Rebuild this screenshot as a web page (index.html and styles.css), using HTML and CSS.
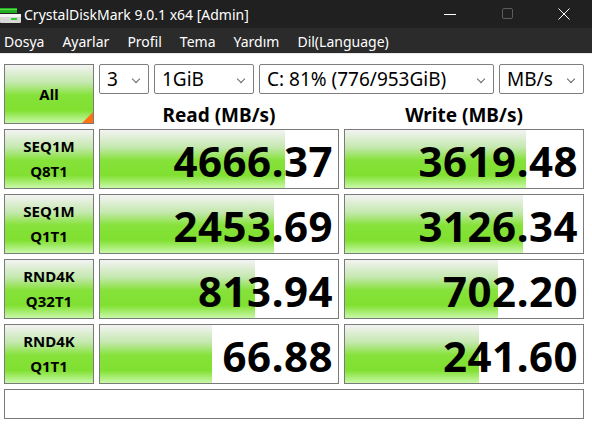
FILE: index.html
```html
<!DOCTYPE html>
<html lang="tr">
<head>
    <meta charset="UTF-8">
    <meta name="viewport" content="width=device-width, initial-scale=1.0">
    <title>CrystalDiskMark 9.0.1 x64 [Admin]</title>
    <link rel="stylesheet" href="styles.css">
</head>
<body>
    <div class="titlebar">
        <svg class="app-icon" width="22" height="20" viewBox="0 0 22 20">
            <rect x="0" y="4" width="17" height="5" fill="#22b022"/>
            <rect x="0" y="5" width="17" height="1" fill="#5ede4a"/>
            <rect x="0" y="10" width="21" height="9" rx="1" fill="#d8d8d8"/>
            <rect x="0" y="10" width="21" height="3" fill="#f4f4f4"/>
            <rect x="11" y="14" width="6" height="2" fill="#2ed02e"/>
        </svg>
        <span class="title">CrystalDiskMark 9.0.1 x64 [Admin]</span>
        <div class="controls">
            <span class="ctl">
                <svg width="12" height="12" viewBox="0 0 12 12"><line x1="0" y1="6.5" x2="12" y2="6.5" stroke="#fff" stroke-width="1"/></svg>
            </span>
            <span class="ctl">
                <svg width="12" height="12" viewBox="0 0 12 12"><rect x="1.5" y="0.5" width="10" height="10" rx="1.5" fill="none" stroke="#5c5c5c" stroke-width="1"/></svg>
            </span>
            <span class="ctl">
                <svg width="12" height="12" viewBox="0 0 12 12"><path d="M0.5 0.5 L11.5 11.5 M11.5 0.5 L0.5 11.5" stroke="#fff" stroke-width="1"/></svg>
            </span>
        </div>
    </div>

    <nav class="menubar">
        <span>Dosya</span>
        <span>Ayarlar</span>
        <span>Profil</span>
        <span>Tema</span>
        <span>Yardım</span>
        <span>Dil(Language)</span>
    </nav>

    <div class="panel">
        <div class="top">
            <button class="all">All</button>
            <div class="settings">
                <div class="selects">
                    <div class="select w-count">3</div>
                    <div class="select w-size">1GiB</div>
                    <div class="select w-drive">C: 81% (776/953GiB)</div>
                    <div class="select w-unit">MB/s</div>
                </div>
                <div class="heads">
                    <div>Read (MB/s)</div>
                    <div>Write (MB/s)</div>
                </div>
            </div>
        </div>

        <div class="results">
            <div class="label">SEQ1M<br>Q8T1</div>
            <div class="meter"><div class="fill" style="width: 77.8%"></div><span>4666.37</span></div>
            <div class="meter"><div class="fill" style="width: 76.0%"></div><span>3619.48</span></div>

            <div class="label">SEQ1M<br>Q1T1</div>
            <div class="meter"><div class="fill" style="width: 73.2%"></div><span>2453.69</span></div>
            <div class="meter"><div class="fill" style="width: 74.9%"></div><span>3126.34</span></div>

            <div class="label">RND4K<br>Q32T1</div>
            <div class="meter"><div class="fill" style="width: 65.2%"></div><span>813.94</span></div>
            <div class="meter"><div class="fill" style="width: 64.1%"></div><span>702.20</span></div>

            <div class="label">RND4K<br>Q1T1</div>
            <div class="meter"><div class="fill" style="width: 47.1%"></div><span>66.88</span></div>
            <div class="meter"><div class="fill" style="width: 56.4%"></div><span>241.60</span></div>
        </div>

        <div class="status"></div>
    </div>
</body>
</html>
```

FILE: styles.css
```css
* {
    box-sizing: border-box;
}

body {
    margin: 0;
    font-family: 'Noto Sans', 'Open Sans', sans-serif;
    background-color: #ffffff;
    color: #000;
}

/* window chrome */
.titlebar {
    height: 28px;
    background-color: #202020;
    display: flex;
    align-items: center;
    color: #ffffff;
}

.app-icon {
    margin: 0 2px 0 0;
    flex: none;
}

.title {
    font-size: 14px;
}

.controls {
    margin-left: auto;
    display: flex;
    height: 100%;
}

.ctl {
    width: 57px;
    display: flex;
    align-items: center;
    justify-content: center;
}

.menubar {
    height: 26px;
    background-color: #2b2b2b;
    border-bottom: 1px solid #e8e8e8;
    display: flex;
    align-items: center;
    padding: 1px 0 0 4px;
    gap: 18px;
    color: #ffffff;
    font-size: 14px;
}

/* benchmark panel */
.panel {
    padding: 10px 8px 0 4px;
}

.top {
    display: flex;
    gap: 5px;
}

.all {
    width: 90px;
    height: 60px;
    border: 1px solid #7a7a7a;
    background: linear-gradient(to bottom, #f3f3f3 0%, #c4e8ae 30%, #86e23a 52%, #80e030 78%, #c9f8a9 100%);
    font-family: inherit;
    font-weight: bold;
    font-size: 15px;
    padding: 0;
    position: relative;
}

.all::after {
    content: "";
    position: absolute;
    right: 0;
    bottom: 0;
    border-style: solid;
    border-width: 0 0 11px 11px;
    border-color: transparent transparent #ff7212 transparent;
}

.settings {
    display: flex;
    flex-direction: column;
}

.selects {
    display: flex;
    gap: 5px;
}

.select {
    height: 30px;
    border: 1px solid #7f7f7f;
    border-radius: 2px;
    font-size: 19px;
    padding-left: 7px;
    display: flex;
    align-items: center;
    position: relative;
}

/* drop-down chevron */
.select::after {
    content: "";
    position: absolute;
    right: 9px;
    top: 11px;
    width: 5px;
    height: 5px;
    border-right: 1px solid #666;
    border-bottom: 1px solid #666;
    transform: rotate(45deg);
}

.w-count { width: 50px; }
.w-size { width: 100px; }
.w-drive { width: 235px; }
.w-unit { width: 85px; }

.heads {
    display: flex;
    gap: 5px;
    height: 30px;
}

.heads div {
    width: 240px;
    text-align: center;
    font-weight: bold;
    font-size: 19px;
    line-height: 30px;
    padding-top: 6px;
}

.results {
    display: grid;
    grid-template-columns: 90px 240px 240px;
    grid-auto-rows: 60px;
    gap: 5px;
    margin-top: 5px;
}

.label {
    border: 1px solid #7a7a7a;
    background: linear-gradient(to bottom, #f3f3f3 0%, #c4e8ae 30%, #86e23a 52%, #80e030 78%, #c9f8a9 100%);
    font-weight: bold;
    font-size: 15px;
    line-height: 25px;
    text-align: center;
    padding-top: 4px;
}

.meter {
    border: 1px solid #7a7a7a;
    background-color: #ffffff;
    position: relative;
    display: flex;
    align-items: center;
    justify-content: flex-end;
    padding: 4px 5px 0 0;
}

.meter .fill {
    position: absolute;
    left: 0;
    top: 0;
    bottom: 0;
    background: linear-gradient(to bottom, #f3f3f3 0%, #c4e8ae 30%, #86e23a 52%, #80e030 78%, #c9f8a9 100%);
}

.meter span {
    position: relative;
    font-weight: bold;
    font-size: 42px;
    line-height: 1;
    letter-spacing: 0.5px;
}

.status {
    margin-top: 5px;
    height: 30px;
    border: 1px solid #7a7a7a;
}
```
